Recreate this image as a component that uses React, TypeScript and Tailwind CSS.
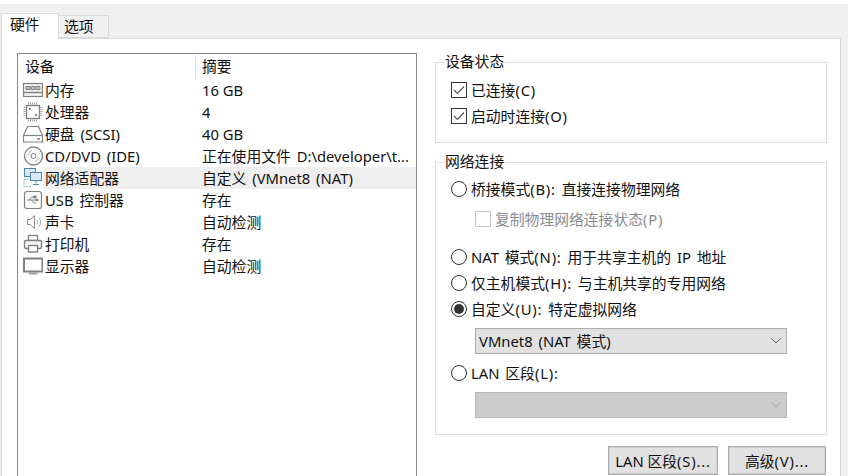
import React from "react";

const devices = [
  { name: "内存", summary: "16 GB", icon: "memory", tight: true },
  { name: "处理器", summary: "4", icon: "cpu" },
  { name: "硬盘 (SCSI)", summary: "40 GB", icon: "disk", tight: true },
  { name: "CD/DVD (IDE)", summary: "正在使用文件 D:\\developer\\t...", icon: "cd" },
  { name: "网络适配器", summary: "自定义 (VMnet8 (NAT)", icon: "network", selected: true },
  { name: "USB 控制器", summary: "存在", icon: "usb" },
  { name: "声卡", summary: "自动检测", icon: "sound" },
  { name: "打印机", summary: "存在", icon: "printer" },
  { name: "显示器", summary: "自动检测", icon: "monitor" },
];

const DeviceIcon = ({ type }: { type: string }) => {
  const c = "#808080";
  return (
    <svg width="20" height="20" viewBox="0 0 20 20" fill="none" stroke={c} strokeWidth="1" className="shrink-0">
      {type === "memory" && (
        <>
          <rect x="0.500" y="3.500" width="19" height="13" fill="#f2f2f2" strokeWidth="1.200" />
          <path d="M3 6.500h4v3H3zM8 6.500h4v3H8zM13 6.500h4v3h-4z" fill="#c4c4c4" />
          <path d="M1 12.500h18" strokeWidth="1.400" />
        </>
      )}
      {type === "cpu" && (
        <>
          <rect x="3.500" y="3.500" width="13" height="13" fill="#fff" strokeWidth="1.400" />
          <path d="M5 1.500h10M5 18.500h10M1.500 5v10M18.500 5v10" strokeWidth="2" strokeDasharray="1 1" stroke="#a0a0a0" />
          <path d="M6 6h2v2H6zM12 12h2v2h-2z" fill={c} stroke="none" />
        </>
      )}
      {type === "disk" && (
        <>
          <path d="M4.500 2.500h11l4 9v6.500h-19v-6.500z" fill="#fff" strokeWidth="1.200" />
          <path d="M0.500 11.500h19" strokeWidth="1.200" />
          <path d="M14 15h3" strokeWidth="1.500" />
        </>
      )}
      {type === "cd" && (
        <>
          <circle cx="10.500" cy="10" r="9" fill="#fafafa" strokeWidth="1.300" />
          <circle cx="10.500" cy="10" r="2.500" />
          <path d="M5 9a6 6 0 0 1 4-4.500M16 11a6 6 0 0 1-4 4.500" stroke="#b5b5b5" />
        </>
      )}
      {type === "network" && (
        <>
          <rect x="1.500" y="0.500" width="11" height="8" fill="#dbe9f4" stroke="#4b87b5" />
          <rect x="7.500" y="4.500" width="11" height="8" fill="#dbe9f4" stroke="#4b87b5" />
          <path d="M13 12.500v3M10 16.500h6" stroke="#4b87b5" />
          <path d="M1 11.500h4M1 11.500v7h7" stroke="#8db4d2" strokeDasharray="2 1" />
        </>
      )}
      {type === "usb" && (
        <>
          <rect x="1.500" y="1.500" width="17" height="17" rx="2.500" fill="#fafafa" strokeWidth="1.200" />
          <path d="M4 10h10M6 10l3-3h2.500M8.500 10l2.500 3h2" />
          <path d="M13.500 9l2 1-2 1z" fill={c} />
          <rect x="11" y="6" width="2" height="2" fill={c} />
        </>
      )}
      {type === "sound" && (
        <>
          <path d="M4.500 7.500h3l4-4v13l-4-4h-3z" fill="#fff" stroke="#8a8a8a" />
          <path d="M14 7.500a4 4 0 0 1 0 5M16 5.500a7 7 0 0 1 0 9" stroke="#b0b0b0" />
        </>
      )}
      {type === "printer" && (
        <>
          <rect x="5.500" y="1.500" width="9" height="5" fill="#fff" strokeWidth="1.300" />
          <rect x="1.500" y="6.500" width="17" height="8" rx="1.500" fill="#f5f5f5" strokeWidth="1.400" />
          <rect x="5.500" y="11.500" width="9" height="6.500" fill="#fff" strokeWidth="1.400" />
        </>
      )}
      {type === "monitor" && (
        <>
          <rect x="1" y="2.500" width="18.500" height="13" fill="#fff" strokeWidth="2" />
          <path d="M6 17.500h8.500" strokeWidth="2" stroke="#a0a0a0" />
        </>
      )}
    </svg>
  );
};

// the "(C)" style shortcut part runs a bit wider than the font gives
const Label = ({ text }: { text: string }) => (
  <span className="whitespace-nowrap">
    {text.split(/(\(.\)[:.]*)/).map((part, i) =>
      i % 2 === 1 ? (
        <span key={i} className="tracking-[0.8px]">
          {part}
        </span>
      ) : (
        part
      ),
    )}
  </span>
);

const Check = ({ checked, disabled }: { checked?: boolean; disabled?: boolean }) => (
  <span
    className={`flex h-[16px] w-[16px] shrink-0 items-center justify-center border bg-white ${
      disabled ? "border-[#c4c4c4]" : "border-[#333333]"
    }`}
  >
    {checked && (
      <svg width="12" height="10" viewBox="0 0 12 10" fill="none" stroke="#555555" strokeWidth="1.200">
        <path d="M1 5l3.500 3.500L11 1.500" />
      </svg>
    )}
  </span>
);

const Radio = ({ checked }: { checked?: boolean }) => (
  <span className="flex h-[16px] w-[16px] shrink-0 items-center justify-center rounded-full border border-[#333333] bg-white">
    {checked && <span className="h-[10px] w-[10px] rounded-full bg-[#333333]" />}
  </span>
);

const RadioRow = ({ label, checked, className }: { label: string; checked?: boolean; className: string }) => (
  <div className={`flex h-[20px] items-center gap-[4px] pl-[15px] ${className}`}>
    <Radio checked={checked} />
    <Label text={label} />
  </div>
);

const Chevron = ({ color }: { color: string }) => (
  <svg width="10" height="6" viewBox="0 0 10 6" fill="none" stroke={color} strokeWidth="1">
    <path d="M0.500 0.500L5 5l4.500-4.500" />
  </svg>
);

const Group = ({ title, className, children }: { title: string; className: string; children: React.ReactNode }) => (
  <fieldset className={`w-[392px] border border-[#dcdcdc] ${className}`}>
    <legend className="ml-[8px] h-[20px] px-[1px] leading-[19px]">{title}</legend>
    {children}
  </fieldset>
);

export default function App() {
  return (
    <div
      className="h-[476px] w-[848px] overflow-hidden bg-white pt-[4px] text-[14.8px] text-[#111111] [word-spacing:2px]"
      style={{ fontFamily: '"Noto Sans", "Noto Sans CJK SC", sans-serif' }}
    >
      <div className="h-[472px] bg-[#f0f0f0]">
        {/* Tabs */}
        <div className="flex h-[34px] items-end pl-[1px]">
          <div className="relative z-10 -mb-[1px] flex h-[26px] w-[58px] items-center border border-b-0 border-[#d9d9d9] bg-white pb-[4px] pl-[8px]">
            硬件
          </div>
          <div className="flex h-[23px] w-[50px] items-center border border-l-0 border-[#d9d9d9] bg-[#f0f0f0] pb-[1px] pl-[5px]">
            选项
          </div>
        </div>

        {/* Panel */}
        <div className="ml-[1px] flex h-[440px] w-[840px] items-start gap-[18px] border border-[#d9d9d9] bg-white pl-[15px] pt-[13px]">
          {/* Device list */}
          <div className="mt-[1px] h-[440px] w-[400px] shrink-0 border border-[#828790]">
            <div className="flex h-[25px] items-center">
              <div className="h-full w-[178px] border-r border-[#e5e5e5] pl-[7px] leading-[24px]">设备</div>
              <div className="h-full flex-1 pl-[6px] leading-[24px]">摘要</div>
            </div>
            {devices.map((d) => (
              <div key={d.name} className="flex h-[22px] items-center whitespace-nowrap">
                <div className="flex w-[25px] shrink-0 justify-end">
                  <DeviceIcon type={d.icon} />
                </div>
                <div className={`flex h-full flex-1 items-center ${d.selected ? "bg-[#efefef]" : ""}`}>
                  <span className="w-[159px] shrink-0 pl-[2px]">{d.name}</span>
                  <span className={`overflow-hidden ${d.tight ? "[word-spacing:0px]" : ""}`}>{d.summary}</span>
                </div>
              </div>
            ))}
          </div>

          {/* Right column */}
          <div className="w-[392px] shrink-0">
            <Group title="设备状态" className="h-[91px]">
              <div className="mt-[9px] flex h-[18px] items-center gap-[4px] pl-[15px]">
                <Check checked />
                <Label text="已连接(C)" />
              </div>
              <div className="mt-[8px] flex h-[18px] items-center gap-[4px] pl-[15px]">
                <Check checked />
                <Label text="启动时连接(O)" />
              </div>
            </Group>

            <Group title="网络连接" className="mt-[9px] h-[283px]">
              <RadioRow label="桥接模式(B): 直接连接物理网络" className="mt-[7px]" />
              <div className="mt-[10px] flex h-[20px] items-center gap-[4px] pl-[39px] text-[#8c8c8c]">
                <Check disabled />
                <Label text="复制物理网络连接状态(P)" />
              </div>
              <RadioRow label="NAT 模式(N): 用于共享主机的 IP 地址" className="mt-[18px]" />
              <RadioRow label="仅主机模式(H): 与主机共享的专用网络" className="mt-[6px]" />
              <RadioRow label="自定义(U): 特定虚拟网络" checked className="mt-[6px]" />
              <div className="ml-[39px] mt-[9px] flex h-[26px] w-[312px] items-center justify-between border border-[#adadad] bg-[#e1e1e1] pl-[3px] pr-[5px]">
                <span>VMnet8 (NAT 模式)</span>
                <Chevron color="#606060" />
              </div>
              <RadioRow label="LAN 区段(L):" className="mt-[9px]" />
              <div className="ml-[39px] mt-[9px] flex h-[26px] w-[312px] items-center justify-end border border-[#b8b8b8] bg-[#cccccc] pr-[5px]">
                <Chevron color="#a8a8a8" />
              </div>
            </Group>

            <div className="mt-[11px] flex justify-end gap-[10px] pr-[1px]">
              <button className="h-[29px] w-[110px] border-2 border-[#d0d0d0] bg-[#e1e1e1] leading-[22px] outline outline-1 -outline-offset-1 outline-[#adadad]">
                <Label text="LAN 区段(S)..." />
              </button>
              <button className="h-[29px] w-[98px] border-2 border-[#d0d0d0] bg-[#e1e1e1] leading-[22px] outline outline-1 -outline-offset-1 outline-[#adadad]">
                <Label text="高级(V)..." />
              </button>
            </div>
          </div>
        </div>
      </div>
    </div>
  );
}
